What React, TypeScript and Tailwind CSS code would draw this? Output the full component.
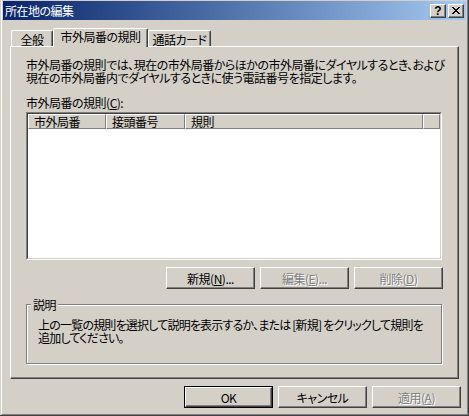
import React from 'react';

const FONT =
  "font-['Noto_Sans_CJK_JP','Noto_Sans_CJK_SC',sans-serif] [font-feature-settings:'palt'] tracking-[-0.5px] whitespace-nowrap";

/* Win2000 classic raised bevel: white top-left, dark outer + gray inner bottom-right */
const RAISED =
  'border border-t-white border-l-white border-r-[#404040] border-b-[#404040] shadow-[inset_-1px_-1px_0_#808080]';

const DISABLED_TEXT = 'text-[#808080] [text-shadow:1px_1px_0_#fff]';

function PushButton({
  children,
  disabled,
  isDefault,
}: {
  children: React.ReactNode;
  disabled?: boolean;
  isDefault?: boolean;
}) {
  const face = (
    <div
      className={`flex h-full w-full items-center justify-center bg-[#d4d0c8] text-[12px] leading-[13px] ${RAISED} ${
        disabled ? DISABLED_TEXT : 'text-black'
      }`}
    >
      {children}
    </div>
  );
  if (isDefault) {
    return <div className="h-[22px] w-[89px] border border-black">{face}</div>;
  }
  return <div className="h-[22px] w-[89px]">{face}</div>;
}

function TitleButton({ children }: { children: React.ReactNode }) {
  return (
    <div className={`flex h-[14px] w-[16px] items-center justify-center bg-[#d4d0c8] ${RAISED}`}>
      {children}
    </div>
  );
}

function Tab({ label, selected }: { label: string; selected?: boolean }) {
  if (selected) {
    return (
      <div className="relative z-10 -mb-px flex h-[19px] w-[95px] items-start justify-center rounded-t-[2px] border-t border-l border-r border-t-white border-l-white border-r-[#404040] bg-[#d4d0c8] pt-[1px] text-[12px] leading-[13px] shadow-[inset_-1px_0_0_#808080]">
        {label}
      </div>
    );
  }
  return (
    <div
      className="flex h-[16px] items-start justify-center rounded-t-[2px] border-t border-l border-r border-t-white border-l-white border-r-[#404040] bg-[#d4d0c8] pt-[2px] text-[12px] leading-[13px] shadow-[inset_-1px_0_0_#808080]"
      style={{ width: label === '全般' ? 42 : 63 }}
    >
      {label}
    </div>
  );
}

function HeaderCell({ label, width }: { label?: string; width?: string }) {
  return (
    <div
      className={`h-full shrink-0 border border-t-white border-l-white border-r-[#808080] border-b-[#808080] bg-[#d4d0c8] pl-[5px] text-[12px] leading-[13px] ${
        width ?? 'flex-1'
      }`}
    >
      {label}
    </div>
  );
}

export default function App() {
  return (
    <div
      className={`h-[416px] w-[469px] overflow-hidden border-r border-b border-r-[#404040] border-b-[#404040] bg-[#d4d0c8] pl-px text-black ${FONT}`}
    >
      <div className="flex h-full flex-col border-l border-r border-b border-l-white border-r-[#808080] border-b-[#808080] p-px">
        {/* Title bar */}
        <div className="flex h-[19px] shrink-0 items-center justify-between bg-gradient-to-r from-[#0a246a] to-[#a6caf0] px-[2px]">
          <span className="text-[12px] leading-[13px] text-white">所在地の編集</span>
          <div className="flex items-center gap-[2px]">
            <TitleButton>
              <span className="font-['Liberation_Sans',sans-serif] text-[12px] font-bold leading-none tracking-normal">?</span>
            </TitleButton>
            <TitleButton>
              <svg width="8" height="7" viewBox="0 0 8 7" shapeRendering="crispEdges">
                <path
                  d="M0 0h2v1H0zM6 0h2v1H6zM1 1h2v1H1zM5 1h2v1H5zM2 2h4v1H2zM3 3h2v1H3zM2 4h4v1H2zM1 5h2v1H1zM5 5h2v1H5zM0 6h2v1H0zM6 6h2v1H6z"
                  fill="#000"
                />
              </svg>
            </TitleButton>
          </div>
        </div>

        {/* Tabs */}
        <div className="mt-[8px] flex items-end pl-[8px]">
          <Tab label="全般" />
          <Tab label="市外局番の規則" selected />
          <Tab label="通話カード" />
        </div>

        {/* Tab panel */}
        <div className={`ml-[7px] h-[333px] w-[449px] shrink-0 ${RAISED} pl-[15px] pt-[11px]`}>
          <p className="text-[12px] leading-[13px]">
            市外局番の規則では、現在の市外局番からほかの市外局番にダイヤルするとき、および
            <br />
            現在の市外局番内でダイヤルするときに使う電話番号を指定します。
          </p>

          <p className="mt-[12px] text-[12px] leading-[13px]">
            市外局番の規則(<u>C</u>):
          </p>

          {/* List view */}
          <div className="mt-[3px] h-[148px] w-[416px] border border-t-[#808080] border-l-[#808080] border-r-white border-b-white">
            <div className="flex h-full flex-col border border-t-[#404040] border-l-[#404040] border-r-[#d4d0c8] border-b-[#d4d0c8] bg-white">
              <div className="flex h-[15px] shrink-0">
                <HeaderCell label="市外局番" width="w-[78px]" />
                <HeaderCell label="接頭番号" width="w-[79px]" />
                <HeaderCell label="規則" width="w-[238px]" />
                <HeaderCell />
              </div>
            </div>
          </div>

          <div className="mt-[7px] flex w-[417px] justify-end gap-[5px]">
            <PushButton>
              新規(<u>N</u>)...
            </PushButton>
            <PushButton disabled>
              編集(<u>E</u>)...
            </PushButton>
            <PushButton disabled>
              削除(<u>D</u>)
            </PushButton>
          </div>

          {/* Description group box */}
          <div className="relative mt-[15px] h-[60px] w-[416px] border border-[#808080] pl-[11px] pt-[13px] shadow-[inset_1px_1px_0_#fff,1px_1px_0_#fff]">
            <span className="absolute -top-[7px] left-[4px] bg-[#d4d0c8] px-[2px] text-[12px] leading-[13px]">
              説明
            </span>
            <p className="text-[12px] leading-[13px] tracking-[-0.8px]">
              上の一覧の規則を選択して説明を表示するか、または [新規] をクリックして規則を
              <br />
              追加してください。
            </p>
          </div>
        </div>

        {/* Dialog buttons */}
        <div className="mt-[7px] flex justify-end gap-[5px] pr-[5px]">
          <PushButton isDefault>OK</PushButton>
          <PushButton>キャンセル</PushButton>
          <PushButton disabled>
            適用(<u>A</u>)
          </PushButton>
        </div>
      </div>
    </div>
  );
}
